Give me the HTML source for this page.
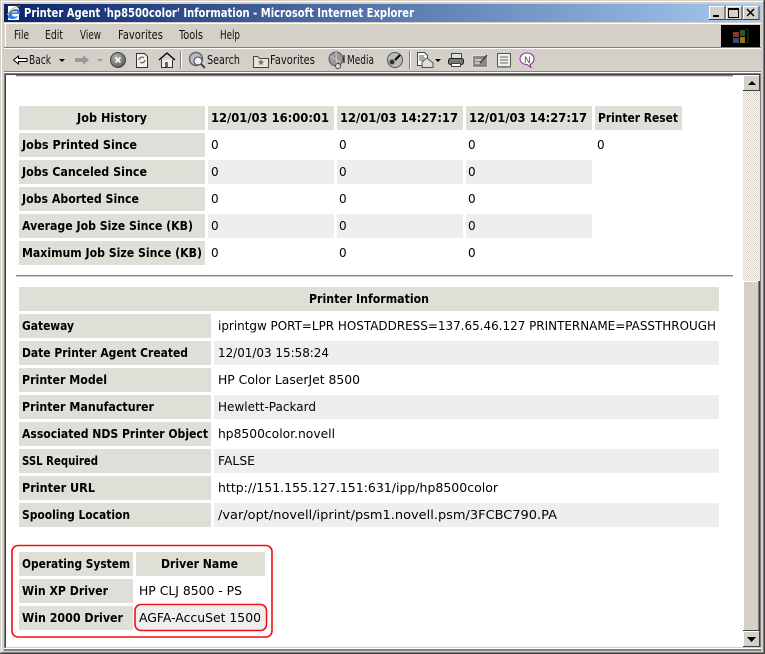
<!DOCTYPE html>
<html><head><meta charset="utf-8"><title>Printer Agent</title>
<style>
html,body{margin:0;padding:0;background:#d4d0c8;overflow:hidden}
svg{display:block}
text{font-family:"DejaVu Sans","Liberation Sans",sans-serif;font-size:12px;fill:#000;transform:translateY(-1px)}
.b{font-weight:bold}
.t{font-family:"DejaVu Sans","Liberation Sans",sans-serif;font-size:12px;font-weight:bold;fill:#fff}
.m{fill:#111}
.l{fill:#dedfd7}
.a{fill:#eeeeee}
.z{font-size:12px}
</style></head><body>
<svg xmlns="http://www.w3.org/2000/svg" width="765" height="654" viewBox="0 0 765 654">
<defs>
<linearGradient id="tb" x1="0" x2="1" y1="0" y2="0"><stop offset="0" stop-color="#0a246a"/><stop offset="1" stop-color="#a6caf0"/></linearGradient>
<pattern id="dit" width="2" height="2" patternUnits="userSpaceOnUse"><rect width="2" height="2" fill="#fff"/><rect width="1" height="1" fill="#d4d0c8"/><rect x="1" y="1" width="1" height="1" fill="#d4d0c8"/></pattern>
<radialGradient id="gb" cx=".4" cy=".35" r=".7"><stop offset="0" stop-color="#bbb"/><stop offset="1" stop-color="#555"/></radialGradient>
</defs>

<!-- window frame -->
<rect width="765" height="654" fill="#d4d0c8"/>
<rect x="1" y="1" width="763" height="1" fill="#fff"/>
<rect x="1" y="1" width="1" height="652" fill="#fff"/>
<rect x="764" y="0" width="1" height="654" fill="#404040"/>
<rect x="763" y="1" width="1" height="652" fill="#808080"/>
<rect x="0" y="653" width="765" height="1" fill="#404040"/>
<rect x="1" y="652" width="763" height="1" fill="#808080"/>

<!-- title bar -->
<rect x="4" y="4" width="757" height="18" fill="url(#tb)"/>
<path d="M8 6h8l3 3v11H8z" fill="#fff"/>
<path d="M8 18c0-6 4-9 8-9 3 0 4 2 4 5h-8c0 3 3 3 6 2-2 3-4 3-6 3-2 0-3-1-4-1z" fill="#2f7fe6"/>
<path d="M12 12h5" stroke="#fff"/>
<path d="M7 15c4-6 9-9 13-9" stroke="#d8a020" stroke-width=".8" fill="none"/>
<text x="24" y="18" class="t" textLength="390" lengthAdjust="spacingAndGlyphs">Printer Agent 'hp8500color' Information - Microsoft Internet Explorer</text>

<!-- caption buttons -->
<g>
<rect x="709" y="6" width="16" height="14" fill="#d4d0c8"/><path d="M709.500 20V6.500h16" stroke="#fff" fill="none"/><path d="M709 19.500h16V6" stroke="#404040" fill="none"/>
<rect x="713" y="15" width="6" height="2" fill="#000"/>
<rect x="726" y="6" width="16" height="14" fill="#d4d0c8"/><path d="M726.500 20V6.500h16" stroke="#fff" fill="none"/><path d="M726 19.500h16V6" stroke="#404040" fill="none"/>
<rect x="728.500" y="8.500" width="10" height="9" fill="none" stroke="#000"/><rect x="728" y="8" width="11" height="2" fill="#000"/>
<rect x="743" y="6" width="16" height="14" fill="#d4d0c8"/><path d="M743.500 20V6.500h16" stroke="#fff" fill="none"/><path d="M743 19.500h16V6" stroke="#404040" fill="none"/>
<path d="M747 9l7 7M754 9l-7 7" stroke="#000" stroke-width="1.500"/>
</g>

<!-- menu bar -->
<rect x="4" y="23" width="757" height="1" fill="#fff"/>
<rect x="4" y="47" width="757" height="1" fill="#808080"/>
<rect x="4" y="48" width="757" height="1" fill="#fff"/>
<rect x="5" y="24" width="1" height="23" fill="#fff"/>
<text x="14" y="40" class="m" textLength="15" lengthAdjust="spacingAndGlyphs">File</text>
<text x="45" y="40" class="m" textLength="18" lengthAdjust="spacingAndGlyphs">Edit</text>
<text x="80" y="40" class="m" textLength="21" lengthAdjust="spacingAndGlyphs">View</text>
<text x="118" y="40" class="m" textLength="45" lengthAdjust="spacingAndGlyphs">Favorites</text>
<text x="179" y="40" class="m" textLength="24" lengthAdjust="spacingAndGlyphs">Tools</text>
<text x="220" y="40" class="m" textLength="20" lengthAdjust="spacingAndGlyphs">Help</text>
<!-- brand -->
<rect x="721" y="25" width="39" height="22" fill="#000"/>
<g transform="translate(733,29)" opacity=".8">
<rect x="0" y="3" width="6" height="5" fill="#a84830"/><rect x="7" y="1" width="5" height="6" fill="#3a7030"/>
<rect x="0" y="9" width="6" height="5" fill="#406090"/><rect x="7" y="8" width="5" height="6" fill="#c09020"/>
<path d="M13 0l2 1v12l-2 1" stroke="#2a4a20" fill="none"/>
</g>

<!-- toolbar -->
<path d="M13.500 60l5-4v2.500h8.500v3h-8.500v2.500z" fill="#fff" stroke="#000" stroke-width="1"/>
<text x="29" y="65" class="m" textLength="22" lengthAdjust="spacingAndGlyphs">Back</text>
<path d="M59 59h6l-3 3z" fill="#000"/>
<path d="M75 58h8v-3l6 5-6 5v-3h-8z" fill="#999"/>
<path d="M97 59h6l-3 3z" fill="#999"/>
<circle cx="118" cy="60" r="7.500" fill="url(#gb)" stroke="#444"/>
<path d="M115.500 57.500l5 5M120.500 57.500l-5 5" stroke="#fff" stroke-width="1.500"/>
<path d="M136.500 53.500h8l3 3v11h-11z" fill="#f4f4f0" stroke="#333"/>
<path d="M139 60a3 3 0 0 1 5-2M145 60a3 3 0 0 1-5 2" stroke="#777" stroke-width="1.500" fill="none"/>
<path d="M159 60l8-7 8 7" fill="none" stroke="#000" stroke-width="1.300"/>
<path d="M161.500 59.500v8h11v-8" fill="#eee" stroke="#333"/>
<rect x="165" y="62" width="3" height="5" fill="#666"/>
<rect x="180" y="51" width="1" height="18" fill="#808080"/><rect x="181" y="51" width="1" height="18" fill="#fff"/>
<circle cx="196" cy="59" r="6.500" fill="#bbb" stroke="#666" stroke-width="1.400"/>
<circle cx="198" cy="61" r="4" fill="#eef" stroke="#444"/>
<path d="M201 64l4 4" stroke="#444" stroke-width="2"/>
<text x="207" y="65" class="m" textLength="33" lengthAdjust="spacingAndGlyphs">Search</text>
<path d="M253.500 56.500h4l2 2h9v9h-15z" fill="#e8e6d8" stroke="#444"/>
<path d="M261 59l1 2 2 .5-1.500 1.500.5 2-2-1-2 1 .5-2-1.500-1.500 2-.5z" fill="#777"/>
<text x="270" y="65" class="m" textLength="45" lengthAdjust="spacingAndGlyphs">Favorites</text>
<circle cx="336" cy="59" r="7" fill="#999" stroke="#555"/>
<path d="M330 56l10 6M336 52l1 14" stroke="#ccc"/>
<circle cx="338" cy="66" r="2.500" fill="#ddd" stroke="#444"/>
<path d="M344 55v8" stroke="#000"/>
<text x="347" y="65" class="m" textLength="27" lengthAdjust="spacingAndGlyphs">Media</text>
<circle cx="395" cy="60" r="7.500" fill="#bbb" stroke="#555"/>
<path d="M395 60l5-5" stroke="#000" stroke-width="2"/>
<circle cx="392" cy="62" r="2.500" fill="#333"/>
<rect x="409" y="51" width="1" height="18" fill="#808080"/><rect x="410" y="51" width="1" height="18" fill="#fff"/>
<path d="M417.500 52.500h7l3 3v10h-10z" fill="#fff" stroke="#444"/>
<path d="M419 56h5M419 58h6M419 60h6" stroke="#555"/>
<path d="M422 62l5-4 6 5v4.500h-11z" fill="#ddd" stroke="#555"/>
<path d="M435 59h6l-3 3z" fill="#000"/>
<rect x="451.500" y="53.500" width="10" height="5" fill="#ddd" stroke="#444"/>
<rect x="448.500" y="58.500" width="15" height="6" rx="2" fill="#777" stroke="#222"/>
<rect x="451.500" y="63.500" width="9" height="3" fill="#fff" stroke="#444"/>
<rect x="472.500" y="55.500" width="15" height="12" fill="#888" stroke="#ddd"/>
<path d="M475 60h7M475 63h5" stroke="#fff"/>
<path d="M480 63l7-8" stroke="#444" stroke-width="1.500"/>
<rect x="497.500" y="53.500" width="13" height="13" fill="#eee" stroke="#555"/>
<path d="M500 57h8M500 60h8M500 63h8" stroke="#666"/>
<path d="M497 67h14" stroke="#888" stroke-width="1.500"/>
<path d="M527 53c4 0 7 2.500 7 6 0 2.500-2 4.500-4 5.500l1 3-4-3c-4 0-7-2.500-7-5.500 0-3.500 3-6 7-6z" fill="#fff" stroke="#8a2a9a" stroke-width="1"/>
<text x="524" y="64" style="font-size:9px;fill:#555">N</text>

<!-- content area -->
<rect x="4" y="71" width="757" height="1" fill="#808080"/>
<rect x="4" y="72" width="757" height="1" fill="#fff"/>
<rect x="4" y="73" width="757" height="578" fill="#808080"/>
<rect x="5" y="74" width="755" height="573" fill="#404040"/>
<rect x="6" y="75" width="737" height="572" fill="#fff"/>
<rect x="16" y="75" width="717" height="1" fill="#808080"/>
<rect x="16" y="76" width="717" height="1" fill="#d4d0c8"/>
<rect x="6" y="647" width="755" height="1" fill="#d4d0c8"/>
<rect x="4" y="648" width="757" height="1" fill="#fff"/>

<!-- scrollbar -->
<rect x="743" y="91" width="17" height="190" fill="url(#dit)"/>
<rect x="743" y="281" width="17" height="350" fill="#d4d0c8"/>
<rect x="743" y="281" width="1" height="350" fill="#fff"/>
<rect x="744" y="281" width="14" height="1" fill="#fff"/>
<rect x="758" y="281" width="1" height="350" fill="#808080"/>
<rect x="759" y="281" width="1" height="350" fill="#404040"/>
<rect x="743" y="630" width="17" height="1" fill="#404040"/>
<g>
<rect x="743" y="75" width="17" height="16" fill="#d4d0c8"/>
<path d="M743.500 90V75.500H759" stroke="#fff" fill="none"/>
<path d="M743 90.500h16.500V75" stroke="#404040" fill="none"/>
<path d="M748 85h8l-4-4z" fill="#000"/>
<rect x="743" y="631" width="17" height="16" fill="#d4d0c8"/>
<path d="M743.500 646V631.500H759" stroke="#fff" fill="none"/>
<path d="M743 646.500h16.500V631" stroke="#404040" fill="none"/>
<path d="M747 637h9l-4.500 5z" fill="#000"/>
</g>

<!-- Job table backgrounds -->
<rect class="l" x="19" y="106" width="186" height="24"/>
<rect class="l" x="208" y="106" width="126" height="24"/>
<rect class="l" x="337" y="106" width="126" height="24"/>
<rect class="l" x="466" y="106" width="126" height="24"/>
<rect class="l" x="595" y="106" width="87" height="24"/>
<rect class="l" x="19" y="133" width="186" height="24"/>
<rect class="l" x="19" y="160" width="186" height="24"/>
<rect class="l" x="19" y="187" width="186" height="24"/>
<rect class="l" x="19" y="214" width="186" height="24"/>
<rect class="l" x="19" y="241" width="186" height="24"/>
<rect class="a" x="208" y="160" width="126" height="24"/>
<rect class="a" x="337" y="160" width="126" height="24"/>
<rect class="a" x="466" y="160" width="126" height="24"/>
<rect class="a" x="208" y="214" width="126" height="24"/>
<rect class="a" x="337" y="214" width="126" height="24"/>
<rect class="a" x="466" y="214" width="126" height="24"/>

<text x="77" y="123" class="b" textLength="70" lengthAdjust="spacingAndGlyphs">Job History</text>
<text x="211" y="123" class="b" textLength="118" lengthAdjust="spacingAndGlyphs">12/01/03 16:00:01</text>
<text x="340" y="123" class="b" textLength="118" lengthAdjust="spacingAndGlyphs">12/01/03 14:27:17</text>
<text x="469" y="123" class="b" textLength="118" lengthAdjust="spacingAndGlyphs">12/01/03 14:27:17</text>
<text x="598" y="123" class="b" textLength="80" lengthAdjust="spacingAndGlyphs">Printer Reset</text>
<text x="22" y="150" class="b" textLength="115" lengthAdjust="spacingAndGlyphs">Jobs Printed Since</text>
<text x="22" y="177" class="b" textLength="125" lengthAdjust="spacingAndGlyphs">Jobs Canceled Since</text>
<text x="22" y="204" class="b" textLength="117" lengthAdjust="spacingAndGlyphs">Jobs Aborted Since</text>
<text x="22" y="231" class="b" textLength="171" lengthAdjust="spacingAndGlyphs">Average Job Size Since (KB)</text>
<text x="22" y="258" class="b" textLength="180" lengthAdjust="spacingAndGlyphs">Maximum Job Size Since (KB)</text>
<text x="211" y="150" class="z">0</text><text x="339" y="150" class="z">0</text><text x="468" y="150" class="z">0</text><text x="597" y="150" class="z">0</text>
<text x="211" y="177" class="z">0</text><text x="339" y="177" class="z">0</text><text x="468" y="177" class="z">0</text>
<text x="211" y="204" class="z">0</text><text x="339" y="204" class="z">0</text><text x="468" y="204" class="z">0</text>
<text x="211" y="231" class="z">0</text><text x="339" y="231" class="z">0</text><text x="468" y="231" class="z">0</text>
<text x="211" y="258" class="z">0</text><text x="339" y="258" class="z">0</text><text x="468" y="258" class="z">0</text>

<!-- rule -->
<rect x="16" y="275" width="717" height="1" fill="#808080"/>
<rect x="16" y="276" width="717" height="1" fill="#d4d0c8"/>

<!-- Printer info -->
<rect class="l" x="19" y="287" width="700" height="24"/>
<rect class="l" x="19" y="314" width="192" height="24"/>
<rect class="l" x="19" y="341" width="192" height="24"/>
<rect class="l" x="19" y="368" width="192" height="24"/>
<rect class="l" x="19" y="395" width="192" height="24"/>
<rect class="l" x="19" y="422" width="192" height="24"/>
<rect class="l" x="19" y="449" width="192" height="24"/>
<rect class="l" x="19" y="476" width="192" height="24"/>
<rect class="l" x="19" y="503" width="192" height="24"/>
<rect class="a" x="214" y="341" width="505" height="24"/>
<rect class="a" x="214" y="395" width="505" height="24"/>
<rect class="a" x="214" y="449" width="505" height="24"/>
<rect class="a" x="214" y="503" width="505" height="24"/>

<text x="309" y="304" class="b" textLength="120" lengthAdjust="spacingAndGlyphs">Printer Information</text>
<text x="22" y="331" class="b" textLength="52" lengthAdjust="spacingAndGlyphs">Gateway</text>
<text x="22" y="358" class="b" textLength="166" lengthAdjust="spacingAndGlyphs">Date Printer Agent Created</text>
<text x="22" y="385" class="b" textLength="85" lengthAdjust="spacingAndGlyphs">Printer Model</text>
<text x="22" y="412" class="b" textLength="132" lengthAdjust="spacingAndGlyphs">Printer Manufacturer</text>
<text x="22" y="439" class="b" textLength="186" lengthAdjust="spacingAndGlyphs">Associated NDS Printer Object</text>
<text x="22" y="466" class="b" textLength="76" lengthAdjust="spacingAndGlyphs">SSL Required</text>
<text x="22" y="493" class="b" textLength="73" lengthAdjust="spacingAndGlyphs">Printer URL</text>
<text x="22" y="520" class="b" textLength="108" lengthAdjust="spacingAndGlyphs">Spooling Location</text>
<text x="218" y="331" textLength="498" lengthAdjust="spacingAndGlyphs">iprintgw PORT=LPR HOSTADDRESS=137.65.46.127 PRINTERNAME=PASSTHROUGH</text>
<text x="218" y="358" textLength="111" lengthAdjust="spacingAndGlyphs">12/01/03 15:58:24</text>
<text x="218" y="385" textLength="142" lengthAdjust="spacingAndGlyphs">HP Color LaserJet 8500</text>
<text x="218" y="412" textLength="98" lengthAdjust="spacingAndGlyphs">Hewlett-Packard</text>
<text x="218" y="439" textLength="117" lengthAdjust="spacingAndGlyphs">hp8500color.novell</text>
<text x="218" y="466" textLength="37" lengthAdjust="spacingAndGlyphs">FALSE</text>
<text x="218" y="493" textLength="280" lengthAdjust="spacingAndGlyphs">http://151.155.127.151:631/ipp/hp8500color</text>
<text x="218" y="520" textLength="339" lengthAdjust="spacingAndGlyphs">/var/opt/novell/iprint/psm1.novell.psm/3FCBC790.PA</text>

<!-- Driver table -->
<rect class="l" x="19" y="552" width="114" height="24"/>
<rect class="l" x="136" y="552" width="129" height="24"/>
<rect class="l" x="19" y="579" width="114" height="24"/>
<rect class="l" x="19" y="606" width="114" height="24"/>
<rect class="a" x="136" y="606" width="129" height="24"/>
<text x="22" y="569" class="b" textLength="108" lengthAdjust="spacingAndGlyphs">Operating System</text>
<text x="161" y="569" class="b" textLength="77" lengthAdjust="spacingAndGlyphs">Driver Name</text>
<text x="22" y="596" class="b" textLength="86" lengthAdjust="spacingAndGlyphs">Win XP Driver</text>
<text x="22" y="623" class="b" textLength="101" lengthAdjust="spacingAndGlyphs">Win 2000 Driver</text>
<text x="139" y="596" textLength="103" lengthAdjust="spacingAndGlyphs">HP CLJ 8500 - PS</text>
<text x="139" y="623" textLength="122" lengthAdjust="spacingAndGlyphs">AGFA-AccuSet 1500</text>

<!-- red highlights -->
<rect x="12" y="545.500" width="260" height="91.500" rx="6" ry="6" fill="none" stroke="#f01010" stroke-width="1.600"/>
<rect x="135" y="604.500" width="131.500" height="26" rx="6" ry="6" fill="none" stroke="#f01010" stroke-width="1.600"/>
</svg>
</body></html>
